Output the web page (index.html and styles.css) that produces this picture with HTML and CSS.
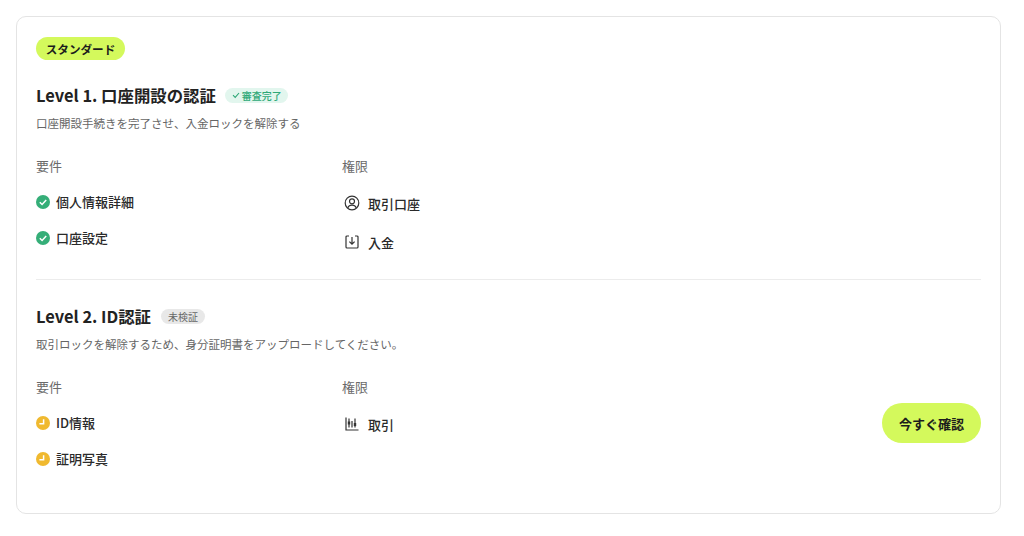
FILE: index.html
```html
<!DOCTYPE html>
<html lang="ja">
<head>
<meta charset="utf-8">
<title>認証レベル</title>
<link rel="stylesheet" href="styles.css">
</head>
<body>
<main class="card">
  <span class="tier">スタンダード</span>
  <section class="level level-first">
    <div class="level-head">
      <h2>Level 1. 口座開設の認証</h2>
      <span class="tag tag-done"><svg class="tag-check" viewBox="0 0 10 10"><path d="M2 5.2 4.2 7.4 8 3"/></svg>審査完了</span>
    </div>
    <p class="desc">口座開設手続きを完了させ、入金ロックを解除する</p>
    <div class="cols">
      <div class="col-req">
        <h3>要件</h3>
        <ul class="req-list">
          <li><svg class="status" viewBox="0 0 14 14"><circle class="ok" cx="7" cy="7" r="7"/><path class="mark" d="M3.8 7.2 6.1 9.5 10.2 5"/></svg>個人情報詳細</li>
          <li><svg class="status" viewBox="0 0 14 14"><circle class="ok" cx="7" cy="7" r="7"/><path class="mark" d="M3.8 7.2 6.1 9.5 10.2 5"/></svg>口座設定</li>
        </ul>
      </div>
      <div class="col-perm">
        <h3>権限</h3>
        <ul class="perm-list">
          <li><svg class="perm-icon" viewBox="0 0 16 16"><circle cx="8" cy="8" r="6.8"/><circle cx="8" cy="6.3" r="2.5"/><path d="M3.6 13C4.6 10.9 6.2 10.2 8 10.2s3.4.7 4.4 2.8"/></svg>取引口座</li>
          <li><svg class="perm-icon" viewBox="0 0 16 16"><path d="M5 2H3a1 1 0 0 0-1 1v10a1 1 0 0 0 1 1h10a1 1 0 0 0 1-1V3a1 1 0 0 0-1-1h-2"/><path d="M8 3v7M5.4 7.6 8 10.2l2.6-2.6"/></svg>入金</li>
        </ul>
      </div>
    </div>
  </section>
  <section class="level level-second">
    <div class="level-head level-head-wide">
      <h2>Level 2. ID認証</h2>
      <span class="tag tag-none">未検証</span>
    </div>
    <p class="desc desc-tight">取引ロックを解除するため、身分証明書をアップロードしてください。</p>
    <div class="cols cols-loose">
      <div class="col-req">
        <h3>要件</h3>
        <ul class="req-list">
          <li><svg class="status" viewBox="0 0 14 14"><circle class="wait" cx="7" cy="7" r="7"/><path class="mark" d="M7.6 3.2V7.8H3.4"/></svg>ID情報</li>
          <li><svg class="status" viewBox="0 0 14 14"><circle class="wait" cx="7" cy="7" r="7"/><path class="mark" d="M7.6 3.2V7.8H3.4"/></svg>証明写真</li>
        </ul>
      </div>
      <div class="col-perm">
        <h3>権限</h3>
        <ul class="perm-list">
          <li><svg class="perm-icon" viewBox="0 0 16 16"><path d="M2 1.5v12.5h12.5"/><path d="M5 2.5v9M8 5v6.5M11 2.5v9"/><path class="thick" d="M5 5.5v3M11 7v3"/></svg>取引</li>
        </ul>
      </div>
      <button class="cta" type="button">今すぐ確認</button>
    </div>
  </section>
</main>
</body>
</html>
```
FILE: styles.css
```css
* { box-sizing: border-box; }
html, body { margin: 0; padding: 0; background: #fff; }
body {
  padding: 16px 23px 0 16px;
  font-family: "Noto Sans CJK JP", "Noto Sans", sans-serif;
  color: #1f1f1f;
}
.card {
  width: 985px;
  height: 498px;
  border: 1px solid #e4e4e4;
  border-radius: 10px;
  padding: 20px 19px;
}
.tier {
  display: flex;
  align-items: center;
  justify-content: center;
  width: 89px;
  height: 23px;
  border-radius: 12px;
  background: #d4f95c;
  font-size: 11.6px;
  font-weight: 700;
  color: #1c1c1c;
}
.level-first { margin-top: 23px; padding-bottom: 25px; border-bottom: 1px solid #ececec; }
.level-second { margin-top: 24px; }
.level-head { display: flex; align-items: center; gap: 9px; height: 24px; }
.level-head-wide { gap: 10px; }
h2 { margin: 0; font-size: 16.4px; line-height: 24px; font-weight: 700; color: #222; }
.tag {
  display: inline-flex;
  align-items: center;
  height: 15px;
  border-radius: 8px;
  font-size: 10px;
  line-height: 15px;
  padding: 0 6px;
}
.tag-done { background: #e2f6ee; color: #2ea877; font-weight: 500; }
.tag-check { width: 10px; height: 10px; margin-right: 1px; fill: none; stroke: #2ea877; stroke-width: 1.1; }
.tag-none { background: #e8e8e8; color: #666; padding: 0 7px; }
.desc { margin: 7px 0 0; font-size: 11.5px; line-height: 18px; color: #666; }
.cols { display: flex; align-items: center; margin-top: 24px; }
.col-req { width: 306px; align-self: flex-start; }
.col-perm { flex: 1; align-self: flex-start; }
h3 { margin: 0; font-size: 13px; line-height: 20px; font-weight: 400; color: #6a6a6a; }
ul { list-style: none; margin: 0; padding: 0; }
.req-list { margin-top: 16px; display: flex; flex-direction: column; gap: 16px; }
.req-list li { display: flex; align-items: center; height: 20px; padding-bottom: 2px; font-size: 13px; font-weight: 500; color: #2a2a2a; }
.status { width: 14px; height: 14px; margin: 2px 6px 0 0; flex: none; }
.ok { fill: #35ae78; }
.wait { fill: #f0b92f; }
.mark { fill: none; stroke: #fff; stroke-width: 1.5; }
.perm-list { margin-top: 15px; display: flex; flex-direction: column; gap: 15px; }
.perm-list li { display: flex; align-items: center; height: 24px; font-size: 13px; font-weight: 500; color: #2a2a2a; }
.perm-icon { width: 16px; height: 16px; margin: 0 8px 0 2px; flex: none; fill: none; stroke: #333; stroke-width: 1.2; }
.thick { stroke-width: 2.4; }
.cta {
  width: 99px;
  height: 40px;
  border: 0;
  border-radius: 20px;
  background: #d4f95c;
  font: 700 13px "Noto Sans CJK JP", sans-serif;
  color: #1c1c1c;
  padding: 0;
}
```
